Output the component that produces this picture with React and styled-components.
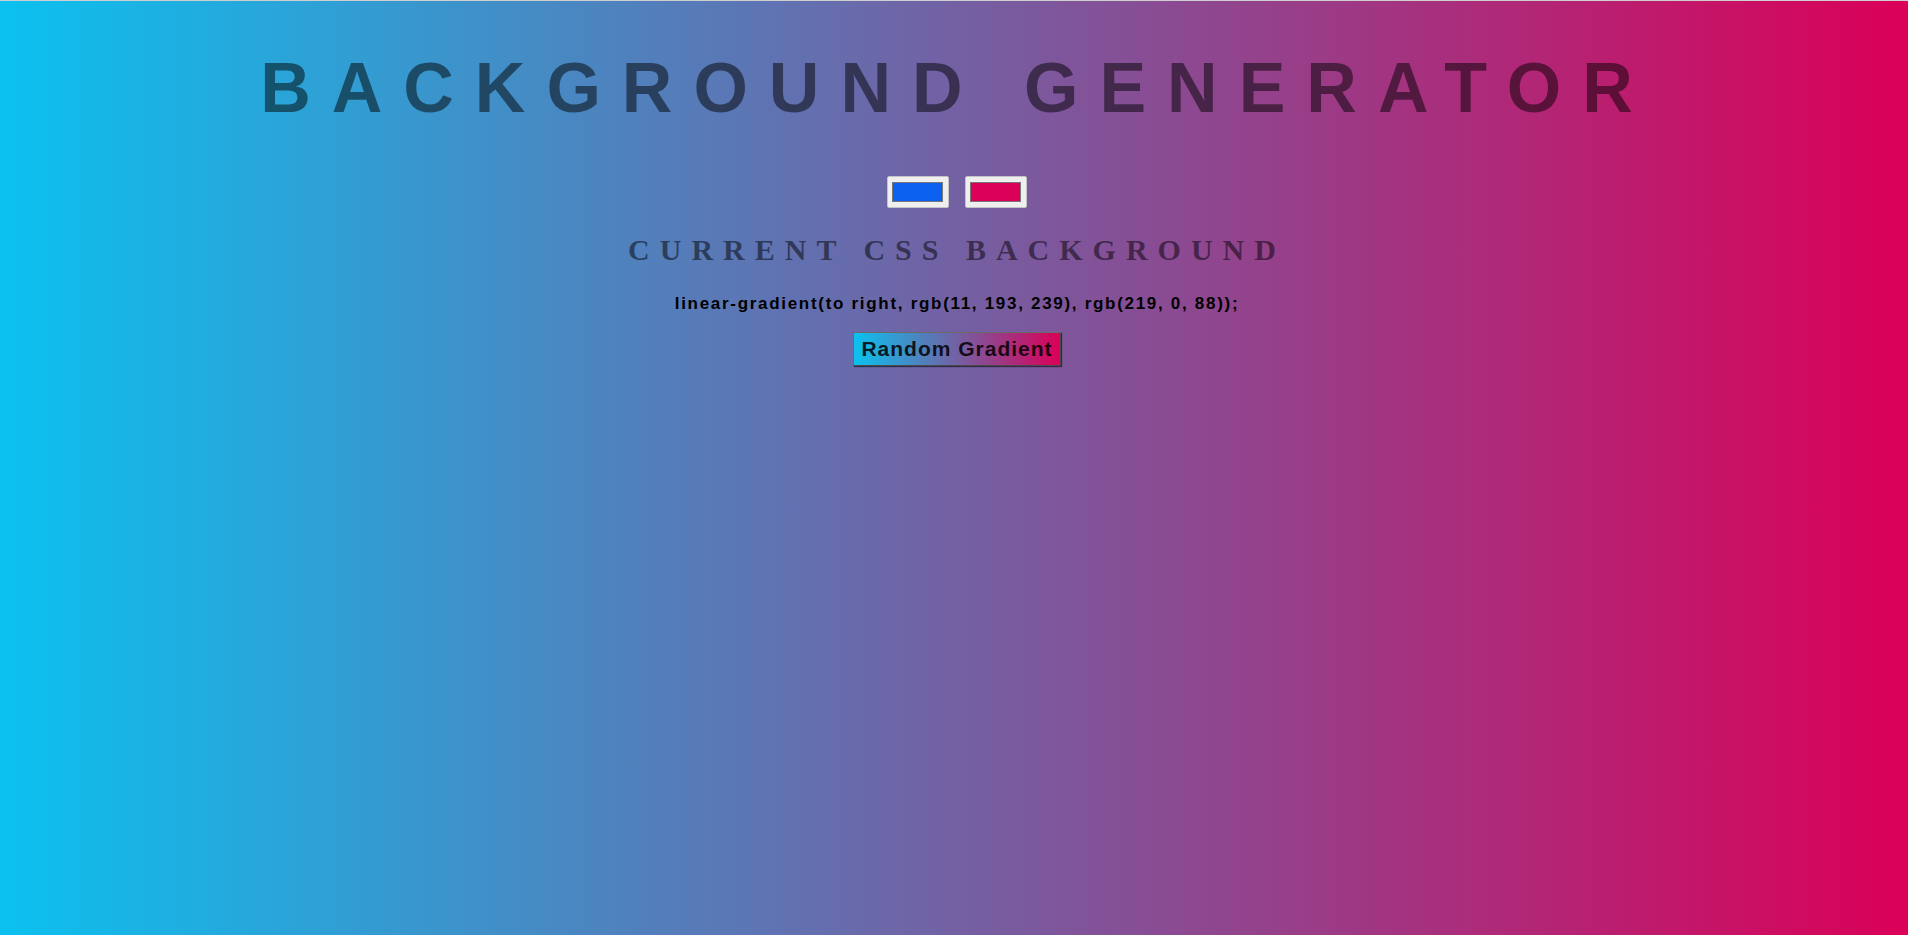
import React, { useState } from "react";
import styled, { createGlobalStyle } from "styled-components";

const GlobalStyle = createGlobalStyle`
  html, body {
    margin: 0;
    padding: 0;
  }
  body {
    font-family: "Liberation Sans", Arial, sans-serif;
  }
`;

const toCss = (a, b) => `linear-gradient(to right, ${a}, ${b})`;

const App = () => {
  const [left] = useState("rgb(11, 193, 239)");
  const [right] = useState("rgb(219, 0, 88)");

  return (
    <React.Fragment>
      <GlobalStyle />
      <Page $from={left} $to={right}>
        <Title>Background Generator</Title>
        <Pickers>
          <ColorInput type="color" defaultValue="#0b60ef" />
          <ColorInput type="color" defaultValue="#db0058" />
        </Pickers>
        <SubTitle>Current CSS Background</SubTitle>
        <CssText>{toCss(left, right)};</CssText>
        <RandomButton $from={left} $to={right}>Random Gradient</RandomButton>
      </Page>
    </React.Fragment>
  );
};

const Page = styled.div`
  box-sizing: border-box;
  min-height: 100vh;
  display: flex;
  flex-direction: column;
  align-items: center;
  padding: 47px 0 0 6px;
  border-top: 1px solid #cfcfcf;
  background: linear-gradient(to right, ${(p) => p.$from}, ${(p) => p.$to});
`;

const Title = styled.h1`
  margin: 0;
  font-family: "Liberation Sans", Arial, sans-serif;
  font-size: 70px;
  line-height: 80px;
  font-weight: 700;
  letter-spacing: 21px;
  text-transform: uppercase;
  color: rgba(0, 0, 0, 0.5);
`;

const Pickers = styled.div`
  display: flex;
  gap: 16px;
  margin-top: 48px;
`;

const ColorInput = styled.input`
  -webkit-appearance: none;
  appearance: none;
  box-sizing: border-box;
  width: 62px;
  height: 32px;
  margin: 0;
  padding: 0;
  border: 1px solid #c4c4c4;
  border-radius: 2px;
  background: #efefef;
  cursor: pointer;

  &::-webkit-color-swatch-wrapper {
    padding: 5px 5px 5px 4px;
  }
  &::-webkit-color-swatch {
    border: 1px solid #777;
    border-radius: 0;
  }
`;

const SubTitle = styled.h3`
  margin: 25px 0 0;
  font-family: "Liberation Serif", "Times New Roman", serif;
  font-size: 30px;
  line-height: 34px;
  font-weight: 700;
  letter-spacing: 10px;
  text-transform: uppercase;
  color: rgba(0, 0, 0, 0.5);
`;

const CssText = styled.h3`
  margin: 27px 0 0;
  font-family: "Liberation Sans", Arial, sans-serif;
  font-size: 17px;
  line-height: 20px;
  font-weight: 700;
  letter-spacing: 1.7px;
  color: #000;
`;

const RandomButton = styled.button`
  margin-top: 18px;
  padding: 4px 7px;
  border: 1px solid #4a4a4a;
  border-top-color: #6a6a6a;
  border-left-color: #6a6a6a;
  border-radius: 0;
  box-shadow: 1px 1px 1px rgba(0, 0, 0, 0.55);
  background: linear-gradient(to right, ${(p) => p.$from}, ${(p) => p.$to});
  font-family: "Liberation Sans", Arial, sans-serif;
  font-size: 21px;
  line-height: 24px;
  font-weight: 700;
  letter-spacing: 1px;
  color: rgba(0, 0, 0, 0.85);
  cursor: pointer;
`;

export default App;
